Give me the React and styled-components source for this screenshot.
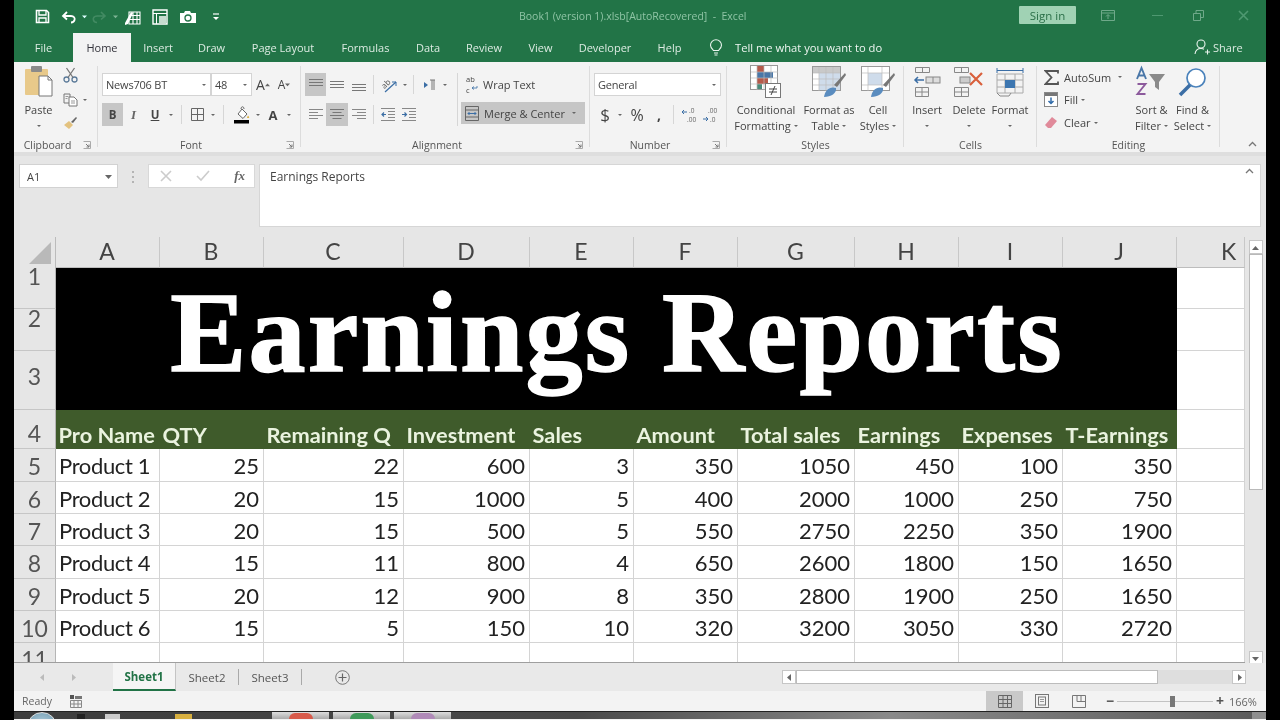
import React from 'react';
import styled, { createGlobalStyle } from 'styled-components';

const Global = createGlobalStyle`
  html, body { margin: 0; padding: 0; background: #000; }
  #root { width: 1280px; height: 720px; overflow: hidden; }
`;
const ui = `"Open Sans", "Noto Sans", sans-serif`;
const cell = `Lato, "Noto Sans", sans-serif`;

const Page = styled.div`width:1280px;height:720px;background:#000;padding:0 14px;box-sizing:border-box;`;
const Screen = styled.div`width:1252px;height:720px;display:flex;flex-direction:column;overflow:hidden;background:#f3f3f3;font-family:${ui};font-size:11px;color:#444;filter:blur(.35px);`;

/* title bar */
const TitleBar = styled.div`height:33px;flex:none;background:#227447;display:flex;align-items:center;color:#fff;`;
const Qat = styled.div`width:505px;flex:none;display:flex;align-items:center;padding-left:20px;box-sizing:border-box;`;
const QatSlot = styled.div`width:${p=>p.$w}px;display:flex;justify-content:center;align-items:center;opacity:${p=>p.$dim?.35:1};`;
const DocTitle = styled.div`flex:none;width:400px;color:#8fc4a5;font-size:10.5px;white-space:pre;margin-top:-2px;`;
const SignIn = styled.div`width:57px;height:18px;margin-left:100px;background:#a0d2b4;color:#2b6f49;display:flex;align-items:center;justify-content:center;font-size:11.5px;border-radius:1px;margin-top:-3px;`;
const WinBtns = styled.div`display:flex;align-items:center;margin-top:-3px;`;
const WinBtn = styled.div`width:${p=>p.$w}px;display:flex;justify-content:center;`;

/* tabs */
const TabBar = styled.div`height:29px;flex:none;background:#227447;display:flex;align-items:stretch;`;
const Tab = styled.div`width:${p=>p.$w}px;flex:none;display:flex;align-items:center;justify-content:center;color:${p=>p.$on?'#33333b':'#dcebe2'};background:${p=>p.$on?'#f3f3f3':'transparent'};font-size:11px;padding-bottom:1px;box-sizing:border-box;`;
const TellMe = styled.div`display:flex;align-items:center;margin-left:14px;gap:12px;color:#eef6f1;font-size:11.2px;width:485px;padding-bottom:1px;`;
const Share = styled.div`display:flex;align-items:center;gap:2px;color:#dcebe2;font-size:11px;padding-bottom:1px;`;

/* ribbon */
const Ribbon = styled.div`height:90px;flex:none;background:#f3f3f3;display:flex;position:relative;border-bottom:4px solid #dedede;box-sizing:content-box;`;
const Group = styled.div`width:${p=>p.$w}px;flex:none;box-sizing:border-box;display:flex;flex-direction:column;position:relative;&::after{content:"";position:absolute;right:0;top:4px;bottom:5px;width:1px;background:#dcdcdc;}`;
const GroupBody = styled.div`height:75px;display:flex;padding-left:${p=>p.$pl||0}px;padding-top:${p=>p.$pt||0}px;box-sizing:border-box;`;
const GroupFoot = styled.div`height:15px;display:flex;align-items:center;padding:0 0 0 ${p=>p.$lp||0}px;font-size:10.5px;color:#555;& > span{text-align:center;flex:1;}`;
const Launch = styled.div`width:17px;flex:none;display:flex;justify-content:flex-start;padding-left:2px;box-sizing:border-box;`;
const Rows = styled.div`display:flex;flex-direction:column;gap:${p=>p.$gap??7}px;width:${p=>p.$w?p.$w+'px':'auto'};flex:none;`;
const Row = styled.div`display:flex;height:${p=>p.$h||23}px;align-items:center;`;
const Btn = styled.div`width:${p=>p.$w}px;height:23px;flex:none;display:flex;align-items:center;justify-content:center;background:${p=>p.$on?'#c6c6c6':'transparent'};font-weight:${p=>p.$bold?700:400};color:#444;font-size:${p=>p.$fs||12}px;`;
const Sep = styled.div`width:1px;height:19px;background:#d6d6d6;margin:0 ${p=>p.$m??5}px;flex:none;`;
const VSep = styled.div`width:1px;height:53px;background:#d6d6d6;margin:0 3px 0 0;flex:none;`;
const Drop = styled.div`width:${p=>p.$w||10}px;flex:none;display:flex;justify-content:center;align-items:center;`;
const Caret = styled.span`display:inline-block;width:0;height:0;border-left:2.5px solid transparent;border-right:2.5px solid transparent;border-top:2.5px solid #666;`;
const Field = styled.div`width:${p=>p.$w}px;height:23px;flex:none;box-sizing:border-box;background:#fff;border:1px solid #d4d4d4;display:flex;align-items:center;justify-content:space-between;padding:0 4px 0 3px;font-size:11px;letter-spacing:-.2px;color:#444;`;
const Big = styled.div`width:${p=>p.$w}px;flex:none;display:flex;flex-direction:column;align-items:center;color:#444;margin-top:${p=>p.$mt||0}px;`;
const BigIcon = styled.div`height:40px;display:flex;align-items:center;justify-content:center;`;
const BigLine = styled.div`height:16px;line-height:16px;white-space:nowrap;font-size:11px;display:flex;align-items:center;gap:3px;`;
const SmallText = styled.span`font-size:11px;margin-left:${p=>p.$ml||0}px;white-space:nowrap;`;
const WideBtn = styled.div`width:124px;height:22px;display:flex;align-items:center;padding-left:${p=>p.$pl||0}px;box-sizing:border-box;background:${p=>p.$on?'#c6c6c6':'transparent'};`;
const Collapse = styled.div`position:absolute;right:9px;bottom:2px;`;

/* formula */
const FormulaBand = styled.div`height:81px;flex:none;background:#e6e6e6;display:flex;align-items:flex-start;padding:8px 5px 0;box-sizing:border-box;`;
const NameBox = styled.div`width:99px;height:24px;box-sizing:border-box;background:#fff;border:1px solid #d2d2d2;display:flex;align-items:center;justify-content:space-between;padding:0 5px 0 7px;font-size:11px;`;
const Dots = styled.div`width:30px;display:flex;flex-direction:column;align-items:center;gap:3px;padding-top:7px;& i{width:2px;height:2px;background:#b4b4b4;display:block;}`;
const FxBox = styled.div`width:107px;height:24px;box-sizing:border-box;background:#fff;border:1px solid #d8d8d8;display:flex;align-items:center;justify-content:space-between;padding:0 9px 0 11px;`;
const FxMark = styled.i`font-family:"Liberation Serif",serif;font-size:13px;font-weight:700;color:#666;`;
const Formula = styled.div`margin-left:4px;width:1002px;height:63px;box-sizing:border-box;background:#fff;border:1px solid #d6d6d6;padding:3px 6px 0 10px;display:flex;justify-content:space-between;font-size:12px;color:#444;`;

/* sheet */
const SheetArea = styled.div`height:426px;flex:none;display:flex;background:#e6e6e6;`;
const Grid = styled.div`width:1231px;flex:none;display:grid;grid-template-columns:42px 104px 104px 140px 126px 104px 104px 117px 104px 104px 114px 68px;grid-template-rows:31px 41px 42px 59px 39px 33px 32px 32px 33px 32px 32px 20px;overflow:hidden;background:#fff;border-bottom:1px solid #9f9f9f;height:425px;`;
const Corner = styled.div`background:#e6e6e6;display:flex;align-items:flex-end;justify-content:flex-end;padding:0 4px 4px 0;border-right:1px solid #bbb;`;
const ColHead = styled.div`background:#e6e6e6;border-right:1px solid #c8c8c8;border-bottom:1px solid #bdbdbd;display:flex;align-items:center;justify-content:center;font-family:${cell};font-size:23px;color:#444;padding:0 ${p=>p.$pl?0:1}px 2px ${p=>p.$pl||0}px;box-sizing:border-box;`;
const RowHead = styled.div`background:#e6e6e6;border-bottom:1px solid #c6c6c6;border-right:1px solid #b5b5b5;display:flex;justify-content:center;align-items:${p=>p.$end?'flex-end':'flex-start'};font-family:${cell};font-size:23px;color:#555;line-height:${p=>p.$lh||26}px;padding-top:${p=>p.$pt||0}px;padding-bottom:${p=>p.$pb||0}px;box-sizing:border-box;`;
const Banner = styled.div`grid-column:2 / 12;grid-row:2 / 5;background:#000;color:#fff;display:flex;align-items:center;justify-content:center;font-family:"Liberation Serif",serif;font-weight:700;font-size:114px;line-height:1;letter-spacing:2.2px;padding:0 0 12px 1px;white-space:nowrap;-webkit-text-stroke:1.5px #fff;`;
const Empty = styled.div`border-bottom:1px solid #d4d4d4;border-right:1px solid #d4d4d4;box-sizing:border-box;`;
const HeadCell = styled.div`background:#3f5b2b;color:#eaf3df;font-family:${cell};font-weight:700;font-size:21.8px;display:flex;align-items:flex-end;padding:0 0 1px 2.5px;box-sizing:border-box;white-space:nowrap;`;
const DataCell = styled.div`border-bottom:1px solid #d4d4d4;border-right:1px solid #d4d4d4;box-sizing:border-box;display:flex;align-items:center;justify-content:${p=>p.$num?'flex-end':'flex-start'};padding:1px ${p=>p.$num?4:3}px 0 3px;font-family:${cell};font-size:22px;color:#222;letter-spacing:${p=>p.$num?0:-.35}px;`;

const VBar = styled.div`width:21px;flex:none;display:flex;flex-direction:column;align-items:center;padding-top:3px;box-sizing:border-box;height:428px;`;
const ScrollBtn = styled.div`width:14px;height:14px;flex:none;background:#fff;border:1px solid #c6c6c6;box-sizing:border-box;display:flex;align-items:center;justify-content:center;`;
const VThumb = styled.div`width:14px;height:236px;flex:none;background:#fff;border:1px solid #b9b9b9;box-sizing:border-box;`;
const VTrack = styled.div`flex:1;`;

const TabsBar = styled.div`height:28px;flex:none;background:#e9e9e9;display:flex;align-items:center;`;
const NavArrows = styled.div`width:99px;display:flex;gap:24px;padding-left:25px;box-sizing:border-box;`;
const Sheet = styled.div`width:${p=>p.$w}px;height:100%;display:flex;align-items:center;justify-content:center;font-size:11.5px;box-sizing:border-box;color:${p=>p.$on?'#217346':'#555'};font-weight:${p=>p.$on?700:400};background:${p=>p.$on?'#f5f5f5':'transparent'};border-bottom:${p=>p.$on?'2px solid #217346':'none'};border-right:${p=>p.$on?'1px solid #c4c4c4':'none'};`;
const TabDiv = styled.div`width:1px;height:16px;background:#a9a9a9;flex:none;`;
const AddBtn = styled.div`width:80px;display:flex;justify-content:center;`;
const HScroll = styled.div`margin-left:400px;display:flex;align-items:center;`;
const HThumb = styled.div`width:362px;height:14px;background:#fff;border:1px solid #bcbcbc;box-sizing:border-box;`;
const HTrack = styled.div`width:74px;height:14px;background:#dedede;`;

const Status = styled.div`height:20px;flex:none;background:#f3f3f3;display:flex;align-items:center;font-size:10.5px;color:#666;`;
const StatusLeft = styled.div`width:972px;display:flex;align-items:center;gap:18px;padding-left:8px;box-sizing:border-box;`;
const ViewBtn = styled.div`width:37px;height:20px;display:flex;align-items:center;justify-content:center;background:${p=>p.$on?'#c9c9c9':'transparent'};`;
const Zoomer = styled.div`display:flex;align-items:center;margin-left:7px;width:125px;`;
const Mark = styled.span`font-size:14px;font-weight:700;color:#555;line-height:1;width:12px;text-align:center;`;
const Track = styled.div`width:96px;height:1px;background:#c2c2c2;margin:0 1px;display:flex;align-items:center;padding-left:53px;box-sizing:border-box;`;
const Handle = styled.div`width:5px;height:11px;background:#777;flex:none;`;
const ZoomPct = styled.div`font-size:11px;color:#666;`;

const Taskbar = styled.div`height:8px;flex:none;background:linear-gradient(90deg,#3d3d3d 0%,#4a4a4a 45%,#8a8a8a 70%,#5a5a5a 100%);border-top:1px solid #222;display:flex;box-sizing:border-box;overflow:hidden;`;
const Orb = styled.div`width:28px;height:28px;border-radius:50%;margin-left:13px;background:radial-gradient(circle,#bfd8e6,#6c98ad);border:1px solid #ddd;flex:none;`;
const TaskIcon = styled.div`width:${p=>p.$w}px;height:5px;margin:2px 0 0 ${p=>p.$m}px;background:${p=>p.$c};flex:none;`;
const TaskButton = styled.div`width:57px;margin-left:${p=>p.$m||4}px;flex:none;background:linear-gradient(#ddd,#aaa);display:flex;justify-content:center;& i{display:block;width:24px;height:6px;border-radius:12px 12px 0 0;background:${p=>p.$c};margin-top:1px;}`;
const TaskEnd = styled.div`width:14px;margin-left:auto;background:#8f8f8f;`;

const S = ({w=16,h=16,vb,children,style})=> <svg width={w} height={h} viewBox={vb||`0 0 ${w} ${h}`} fill="none" style={style}>{children}</svg>;

const SaveIcon=()=> <S w={15} h={15}><path d="M1.5 1.5h10l2 2v10h-12z" stroke="#fff" strokeWidth="1.6"/><path d="M4 2v4h7V2M4 13V9h7v4" stroke="#fff" strokeWidth="1.3"/></S>;
const UndoIcon=({c='#fff'})=> <S w={16} h={14}><path d="M6 2L2 6l4 3.5M2.5 6H10c3 0 4 2 3.6 3.8C13.2 11.5 12 12.5 10 12.5" stroke={c} strokeWidth="1.8"/></S>;
const RedoIcon=()=> <S w={16} h={14}><path d="M10 2l4 4-4 3.5M13.5 6H6C3 6 2 8 2.4 9.8 2.8 11.5 4 12.5 6 12.5" stroke="#7fb596" strokeWidth="1.6"/></S>;
const FormIcon=()=> <S w={17} h={16}><path d="M5 3h11v12H5zM5 6.5h11M5 10.5h11M9 3v12M13 3v12" stroke="#fff" strokeWidth="1.1"/><path d="M1 14L7 3l2 1-5 11-3 1z" fill="#fff"/></S>;
const PreviewIcon=()=> <S w={16} h={16}><path d="M1 1h14v14H1z" stroke="#fff" strokeWidth="1.4"/><path d="M1 4.5h14M4.5 4.5V15" stroke="#fff"/><rect x="7" y="7" width="7" height="7" fill="#c6dccf"/></S>;
const CameraIcon=()=> <S w={16} h={13}><path d="M0 3h4l1-2h5l1 2h5v10H0z" fill="#fff"/><circle cx="8" cy="8" r="3" stroke="#227447" strokeWidth="1.3"/></S>;
const QatMore=()=> <S w={8} h={9}><path d="M1 2h6" stroke="#fff" strokeWidth="1.2"/><path d="M1 5h6L4 8z" fill="#fff"/></S>;
const Bulb=()=> <S w={14} h={17}><path d="M4.5 11.5C3 10 1.5 8.7 1.5 6.2a5.5 5.5 0 0111 0c0 2.5-1.5 3.800-3 5.300zM5 14h4M5.500 16h3" stroke="#eaf4ee" strokeWidth="1.1"/></S>;
const ShareIcon=()=> <S w={17} h={16}><circle cx="7" cy="5" r="4" stroke="#eaf4ee" strokeWidth="1.1"/><path d="M1 15c.5-3.500 2.500-5.500 6-5.500 1.300 0 2.300.3 3 .8M11 13h5M13.500 10.500v5" stroke="#eaf4ee" strokeWidth="1.1"/></S>;

const PasteIcon=()=> <S w={30} h={34}><rect x="1" y="4" width="23" height="26" rx="1" fill="#e8c98a"/><rect x="7" y="1" width="11" height="6" rx="1" fill="#8a8a8a"/><path d="M15 11h9l4 4v16H15z" fill="#fff" stroke="#777"/><path d="M24 11v4h4" stroke="#777"/></S>;
const CutIcon=()=> <S w={15} h={16}><circle cx="3.500" cy="12.500" r="2.500" stroke="#5b7a99" strokeWidth="1.3"/><circle cx="11.500" cy="12.500" r="2.500" stroke="#5b7a99" strokeWidth="1.3"/><path d="M5 10.500L11.500 1M10 10.500L3.500 1" stroke="#777" strokeWidth="1.3"/></S>;
const CopyIcon=()=> <S w={15} h={14}><path d="M1 1h6v9H1z" stroke="#777" fill="#f3f3f3"/><path d="M6 4h5l3 3v6H6z" stroke="#777" fill="#fff"/><path d="M8 8h4M8 10h4M2.500 3.500h3M2.500 5.500h2" stroke="#999"/></S>;
const BrushIcon=()=> <S w={15} h={14}><path d="M1 9l5-4 4 4-4 4z" fill="#e3c27f"/><path d="M8 6l5-5 1 1-4 5z" fill="#666"/></S>;
const Launcher=()=> <S w={8} h={8}><path d="M.5.5h7v7h-7" stroke="#aaa"/><path d="M3 3l3 3M6 3.500V6H3.500" stroke="#777"/></S>;
const BorderIcon=()=> <S w={13} h={13}><path d="M.5.5h12v12H.5zM6.500.5v12M.5 6.500h12" stroke="#666"/></S>;
const FillIcon=()=> <S w={17} h={19}><path d="M5 9l4-5 5 5-4 4.500z" fill="#fff" stroke="#666"/><path d="M8 4c0-3 3-3 3 0" stroke="#666"/><path d="M15 10.500l1.300 2.200-2.300.3z" fill="#d8a520"/><rect x="1" y="15" width="15" height="3.500" fill="#000"/></S>;
const lines=(ys,ws,c='#777',w=16,h=14,x0)=> <S w={w} h={h}>{ys.map((y,i)=><rect key={i} x={x0?x0(ws[i]):(w-ws[i])/2} y={y} width={ws[i]} height="1" fill={c}/>)}</S>;
const OrientIcon=()=> <S w={16} h={16} style={{overflow:'visible'}}><text x="1" y="10" fontSize="8" fontFamily="Open Sans" fill="#555" transform="rotate(-45 5 8)">ab</text><path d="M4 15L15 5" stroke="#3b6ea5" strokeWidth="1.200"/><path d="M15 9V5h-4" stroke="#3b6ea5"/></S>;
const RtlIcon=()=> <S w={13} h={12}><path d="M1 3l4 3-4 3z" fill="#3b6ea5"/><path d="M7 1h5M9 1v10M11 1v10" stroke="#777"/></S>;
const IndentIcon=({inc})=> <S w={16} h={13}><path d="M1 .5h14M1 12.500h14M8 3.500h7M8 6.500h7M8 9.500h7" stroke="#888"/><path d={inc?"M1 6.500h4M3.500 4.500l2 2-2 2":"M6 6.500H2M4 4.500l-2 2 2 2"} stroke="#3b6ea5" strokeWidth="1.200"/></S>;
const WrapIcon=()=> <S w={13} h={16} style={{overflow:'visible'}}><text x="0" y="6" fontSize="7.500" fontFamily="Open Sans" fill="#444">ab</text><text x="0" y="16.500" fontSize="7.500" fontFamily="Open Sans" fill="#444">c</text><path d="M6 12h5V10M6 12l2-1.500M6 12l2 1.500" stroke="#3b6ea5" strokeWidth=".8"/></S>;
const MergeIcon=()=> <S w={14} h={15}><path d="M.5.5h13v14H.5zM.5 4h13M.5 11h13" stroke="#666"/><path d="M3 7.500h8M4.500 6l-1.500 1.500L4.500 9M9.500 6L11 7.500 9.500 9" stroke="#3b6ea5"/></S>;
const DecIcon=({r})=> <S w={18} h={14} style={{overflow:'visible'}}>
  <text x={r?6:8} y="5" fontSize="6.500" fill="#666" fontFamily="Open Sans">{r?'.00':'.0'}</text>
  <text x={r?8:6} y="14" fontSize="6.500" fill="#666" fontFamily="Open Sans">{r?'.0':'.00'}</text>
  <path d={r?"M1 11h5M4 9l2 2-2 2":"M1 4h5M3 2L1 4l2 2"} stroke="#3b6ea5"/></S>;

const CondIcon=()=> <S w={32} h={34}><rect x=".5" y=".5" width="27" height="24" fill="#fff" stroke="#999"/><rect x="7" y="1" width="7" height="6" fill="#b55a4b"/><rect x="7" y="7" width="16" height="6" fill="#4a77a8"/><rect x="7" y="13" width="11" height="6" fill="#b55a4b"/><rect x="7" y="19" width="5" height="5" fill="#4a8a7a"/><path d="M7 1v24M14 1v24M21 1v24M1 7h27M1 13h27M1 19h27" stroke="#bbb" strokeWidth=".7"/><rect x="15.500" y="18.500" width="15" height="14" fill="#fff" stroke="#777"/><path d="M19 24h8M19 27h8M25 21l-4 9" stroke="#444"/></S>;
const TableIcon=()=> <S w={34} h={32}><rect x=".5" y=".5" width="28" height="24" fill="#fff" stroke="#999"/><rect x="1" y="1" width="27" height="6" fill="#c9c9c9"/><rect x="7" y="7" width="21" height="17" fill="#cfdceb"/><path d="M7 1v24M14 1v24M21 1v24M1 7h27M1 13h27M1 19h27" stroke="#bbb" strokeWidth=".7"/><path d="M22 19L33 7l1 2-9 12z" fill="#777"/><path d="M12 31c1-7 6-11 12-9 1 5-5 9-12 9z" fill="#5a8cbf"/></S>;
const CellStyIcon=()=> <S w={34} h={32}><rect x=".5" y=".5" width="28" height="24" fill="#fff" stroke="#999"/><rect x="7" y="7" width="14" height="12" fill="#cfdceb"/><path d="M1 7h27M1 19h27M7 1v24M21 1v24" stroke="#bbb" strokeWidth=".7"/><path d="M22 19L33 7l1 2-9 12z" fill="#777"/><path d="M10 31c1-7 6-11 12-9 1 5-5 9-12 9z" fill="#5a8cbf"/></S>;
const InsertIcon=()=> <S w={28} h={30}><path d="M2.500.5h14v5h-14zM9.500.5v5M2.500 20.500h13v9h-13zM9 20.500v9M2.500 25h13" stroke="#888"/><path d="M2 13h9M5 10l-3 3 3 3" stroke="#3b6ea5" strokeWidth="1.500"/><rect x="13" y="10" width="14" height="6" fill="#ddd" stroke="#888"/><path d="M20 10v6" stroke="#888"/></S>;
const DeleteIcon=()=> <S w={30} h={30}><path d="M.5.5h14v5h-14zM7.500.5v5M.5 20.500h14v9H.5zM7.500 20.500v9M.5 25h14" stroke="#888"/><rect x="6" y="10" width="10" height="6" fill="#ccc" stroke="#888"/><path d="M16 6l12 12M28 6L16 18" stroke="#d9603c" strokeWidth="2.200"/></S>;
const FormatIcon=()=> <S w={28} h={30}><path d="M1 1v5M27 1v5M1 3.500h26" stroke="#3b6ea5"/><path d="M1 7h26v19H1zM9 7v19M19 7v19M1 13h26M1 20h26" stroke="#aaa"/><rect x="9" y="13" width="10" height="8" fill="#3d76b0"/><path d="M1 26l3 3h9l2-3" stroke="#888"/></S>;
const SigmaIcon=()=> <S w={15} h={15}><path d="M14 3.500V1H1.500l6 6.500-6 6.500H14v-2.500" stroke="#555" strokeWidth="1.800"/></S>;
const FillDown=()=> <S w={14} h={15}><rect x=".5" y=".5" width="13" height="14" fill="#fff" stroke="#888"/><rect x="1" y="1" width="12" height="3" fill="#777"/><path d="M7 5.500v6M4.500 9L7 11.500 9.500 9" stroke="#2f6aa8" strokeWidth="1.500"/></S>;
const EraserIcon=()=> <S w={14} h={13}><path d="M1 9l7-8 5 4-6 7H4z" fill="#e08a9a"/></S>;
const SortIcon=()=> <S w={32} h={30} style={{overflow:'visible'}}><path d="M1 12L5.500 1 10 12M3 8.500h5" stroke="#4a77a8" strokeWidth="1.900"/><path d="M1.500 17h8l-8 10h8" stroke="#8c5a9c" strokeWidth="1.900"/><path d="M13 7h16l-6 8v8l-4-3v-5z" fill="#8a8a8a"/></S>;
const FindIcon=()=> <S w={30} h={30}><circle cx="18" cy="11" r="9" stroke="#4a82bb" strokeWidth="1.700" fill="#fff"/><path d="M12 18L2 28" stroke="#3b6ea5" strokeWidth="3.500"/></S>;
const XIcon=({c='#ccc',s=12})=> <S w={s} h={s}><path d={`M1 1L${s-1} ${s-1}M${s-1} 1L1 ${s-1}`} stroke={c} strokeWidth="1.600"/></S>;
const CheckIcon=()=> <S w={14} h={12}><path d="M1 6l4 4 8-9" stroke="#ccc" strokeWidth="1.600"/></S>;
const Chevron=({c='#777'})=> <S w={9} h={6}><path d="M1 5l3.500-3.500L8 5" stroke={c} strokeWidth="1.300"/></S>;
const Tri=({d,c='#666',s=7})=> { const p={up:'M0 6L3.500 2 7 6z',down:'M0 2l3.500 4L7 2z',left:'M5 0L1 3.500 5 7z',right:'M2 0l4 3.500L2 7z'}[d]; return <S w={s} h={s} vb="0 0 7 7"><path d={p} fill={c}/></S>; };
const PlusCircle=()=> <S w={15} h={15}><circle cx="7.500" cy="7.500" r="6.800" stroke="#777"/><path d="M3.500 7.500h8M7.500 3.500v8" stroke="#666" strokeWidth="1.200"/></S>;
const MacroIcon=()=> <S w={12} h={13}><rect x="0" y="0" width="4" height="4" fill="#555"/><rect x="5" y="1" width="7" height="3" fill="#777"/><path d="M.5 5.500h11v7H.5zM4 5.500v7M8 5.500v7M.5 9h11" stroke="#888"/></S>;
const NormalView=()=> <S w={14} h={13}><path d="M.5.5h13v12H.5zM5 .5v12M9.500.5v12M.5 4.500h13M.5 8.500h13" stroke="#666"/></S>;
const LayoutView=()=> <S w={14} h={14}><rect x=".5" y=".5" width="13" height="13" stroke="#777"/><rect x="3.500" y="3" width="7" height="8" stroke="#777"/><path d="M5 5.500h4M5 7.500h4" stroke="#999"/></S>;
const BreakView=()=> <S w={14} h={13}><path d="M.5 12.500V.5h13v12zM5 .5v6h8M9 .5v6" stroke="#777"/></S>;
const RestoreIcon=()=> <S w={11} h={11}><path d="M.5 3.500h7v7h-7zM3 3V.5h7.500v7H8" stroke="#6fa98a"/></S>;
const RibbonOpt=()=> <S w={14} h={11}><path d="M.5.5h13v10H.5zM.5 3h13" stroke="#6fa98a"/><path d="M7 9V5M5 6.500L7 4.500l2 2" stroke="#6fa98a"/></S>;

const colLetters = ['A','B','C','D','E','F','G','H','I','J','K'];
const heads = ['Pro Name','QTY','Remaining Q','Investment','Sales','Amount','Total sales','Earnings','Expenses','T-Earnings'];
const data = [
 ['Product 1',25,22,600,3,350,1050,450,100,350],
 ['Product 2',20,15,1000,5,400,2000,1000,250,750],
 ['Product 3',20,15,500,5,550,2750,2250,350,1900],
 ['Product 4',15,11,800,4,650,2600,1800,150,1650],
 ['Product 5',20,12,900,8,350,2800,1900,250,1650],
 ['Product 6',15,5,150,10,320,3200,3050,330,2720],
];
const tabs=[['File',59],['Home',58],['Insert',54],['Draw',53],['Page Layout',90],['Formulas',75],['Data',50],['Review',62],['View',51],['Developer',78],['Help',51]];

const Foot=({t,l,lp})=> <GroupFoot $lp={lp}><span>{t}</span>{l && <Launch><Launcher/></Launch>}</GroupFoot>;

export default function App(){
 return <Page><Global/><Screen>
  <TitleBar>
   <Qat>
    <QatSlot $w={16}><SaveIcon/></QatSlot>
    <QatSlot $w={10}/>
    <QatSlot $w={18}><UndoIcon/></QatSlot>
    <QatSlot $w={12}><Tri d="down" c="#dff" s={5}/></QatSlot>
    <QatSlot $w={18} $dim><RedoIcon/></QatSlot>
    <QatSlot $w={14}><Tri d="down" c="#7fb596" s={5}/></QatSlot>
    <QatSlot $w={20}><FormIcon/></QatSlot>
    <QatSlot $w={8}/>
    <QatSlot $w={20}><PreviewIcon/></QatSlot>
    <QatSlot $w={8}/>
    <QatSlot $w={20}><CameraIcon/></QatSlot>
    <QatSlot $w={8}/>
    <QatSlot $w={20}><QatMore/></QatSlot>
   </Qat>
   <DocTitle>{'Book1 (version 1).xlsb[AutoRecovered]  -  Excel'}</DocTitle>
   <SignIn>Sign in</SignIn>
   <WinBtns>
    <WinBtn $w={64}><RibbonOpt/></WinBtn>
    <WinBtn $w={34}><S w={11} h={3}><path d="M0 1.500h11" stroke="#4f9871"/></S></WinBtn>
    <WinBtn $w={48}><RestoreIcon/></WinBtn>
    <WinBtn $w={42}><XIcon c="#4f9871" s={11}/></WinBtn>
   </WinBtns>
  </TitleBar>
  <TabBar>
   {tabs.map(([t,w])=><Tab key={t} $w={w} $on={t==='Home'}>{t}</Tab>)}
   <TellMe><Bulb/>Tell me what you want to do</TellMe>
   <Share><ShareIcon/>Share</Share>
  </TabBar>
  <Ribbon>
   <Group $w={84}>
    <GroupBody $pl={2}>
     <Big $w={45}><BigIcon><PasteIcon/></BigIcon><BigLine>Paste</BigLine><BigLine><Caret/></BigLine></Big>
     <Rows $gap={0} $w={30}>
      <Row $h={26}><Drop $w={18}><CutIcon/></Drop></Row>
      <Row $h={23}><Drop $w={18}><CopyIcon/></Drop><Drop $w={12}><Caret/></Drop></Row>
      <Row $h={23}><Drop $w={18}><BrushIcon/></Drop></Row>
     </Rows>
    </GroupBody>
    <Foot t="Clipboard" l/>
   </Group>

   <Group $w={203}>
    <GroupBody $pl={4} $pt={11}>
     <Rows>
      <Row>
       <Field $w={109}>News706 BT<Caret/></Field>
       <Field $w={41}>48<Caret/></Field>
       <Btn $w={22} $fs={14}>A<Tri d="up" s={5} /></Btn>
       <Btn $w={20} $fs={12}>A<Tri d="down" s={5}/></Btn>
      </Row>
      <Row>
       <Btn $w={21} $on $bold $fs={11.5}>B</Btn>
       <Btn $w={21} $fs={12}><FxMark>I</FxMark></Btn>
       <Btn $w={22} $bold $fs={11.5}><u>U</u></Btn>
       <Drop><Caret/></Drop>
       <Sep/>
       <Btn $w={21}><BorderIcon/></Btn>
       <Drop><Caret/></Drop>
       <Sep/>
       <Btn $w={24}><FillIcon/></Btn>
       <Drop $w={9}><Caret/></Drop>
       <Btn $w={22} $bold $fs={13}>A</Btn>
       <Drop><Caret/></Drop>
      </Row>
     </Rows>
    </GroupBody>
    <Foot t="Font" l/>
   </Group>

   <Group $w={289}>
    <GroupBody $pl={4} $pt={11}>
     <Rows $w={152}>
      <Row>
       <Btn $w={21} $on>{lines([1,4,7],[14,14,14],'#777')}</Btn>
       <Btn $w={22}>{lines([3,6,9],[14,14,14],'#777')}</Btn>
       <Btn $w={21}>{lines([6,9,12],[14,14,14],'#777')}</Btn>
       <Sep $m={4}/>
       <Btn $w={22}><OrientIcon/></Btn>
       <Drop $w={9}><Caret/></Drop>
       <Sep $m={4}/>
       <Btn $w={22}><RtlIcon/></Btn>
       <Drop><Caret/></Drop>
      </Row>
      <Row>
       <Btn $w={21}>{lines([1,4,7,10],[14,9,14,9],'#888',16,14,()=>1)}</Btn>
       <Btn $w={22} $on>{lines([1,4,7,10],[14,9,14,9],'#777')}</Btn>
       <Btn $w={21}>{lines([1,4,7,10],[14,9,14,9],'#888',16,14,(w)=>15-w)}</Btn>
       <Sep $m={4}/>
       <Btn $w={20}><IndentIcon/></Btn>
       <Btn $w={21}><IndentIcon inc/></Btn>
      </Row>
     </Rows>
     <VSep/>
     <Rows $w={124}>
      <WideBtn $pl={5}><WrapIcon/><SmallText $ml={4}>Wrap Text</SmallText></WideBtn>
      <WideBtn $on $pl={4}><MergeIcon/><SmallText $ml={5}>Merge &amp; Center</SmallText><Drop $w={18} ><Caret/></Drop></WideBtn>
     </Rows>
    </GroupBody>
    <Foot t="Alignment" l/>
   </Group>

   <Group $w={137}>
    <GroupBody $pl={4} $pt={11}>
     <Rows>
      <Row><Field $w={127}>General<Caret/></Field></Row>
      <Row>
       <Btn $w={22} $fs={17}>$</Btn><Drop $w={8}><Caret/></Drop>
       <Btn $w={26} $fs={16}>%</Btn>
       <Btn $w={18} $bold $fs={14}>,</Btn>
       <Sep $m={5}/>
       <Btn $w={21}><DecIcon/></Btn>
       <Btn $w={21}><DecIcon r/></Btn>
      </Row>
     </Rows>
    </GroupBody>
    <Foot t="Number" l/>
   </Group>

   <Group $w={177}>
    <GroupBody $pl={2}>
     <Big $w={74}><BigIcon><CondIcon/></BigIcon><BigLine>Conditional</BigLine><BigLine>Formatting <Caret/></BigLine></Big>
     <Big $w={52}><BigIcon><TableIcon/></BigIcon><BigLine>Format as</BigLine><BigLine>Table <Caret/></BigLine></Big>
     <Big $w={46}><BigIcon><CellStyIcon/></BigIcon><BigLine>Cell</BigLine><BigLine>Styles <Caret/></BigLine></Big>
    </GroupBody>
    <Foot t="Styles"/>
   </Group>

   <Group $w={133}>
    <GroupBody $pl={2}>
     <Big $w={42}><BigIcon><InsertIcon/></BigIcon><BigLine>Insert</BigLine><BigLine><Caret/></BigLine></Big>
     <Big $w={42}><BigIcon><DeleteIcon/></BigIcon><BigLine>Delete</BigLine><BigLine><Caret/></BigLine></Big>
     <Big $w={40}><BigIcon><FormatIcon/></BigIcon><BigLine>Format</BigLine><BigLine><Caret/></BigLine></Big>
    </GroupBody>
    <Foot t="Cells"/>
   </Group>

   <Group $w={183}>
    <GroupBody $pl={7} $pt={4}>
     <Rows $gap={0} $w={87}>
      <Row $h={22}><SigmaIcon/><SmallText $ml={5}>AutoSum</SmallText><Drop $w={18}><Caret/></Drop></Row>
      <Row $h={23}><FillDown/><SmallText $ml={6}>Fill</SmallText><Drop $w={10}><Caret/></Drop></Row>
      <Row $h={23}><EraserIcon/><SmallText $ml={6}>Clear</SmallText><Drop $w={10}><Caret/></Drop></Row>
     </Rows>
     <Big $w={41} $mt={-4}><BigIcon><SortIcon/></BigIcon><BigLine>Sort &amp;</BigLine><BigLine>Filter <Caret/></BigLine></Big>
     <Big $w={41} $mt={-4}><BigIcon><FindIcon/></BigIcon><BigLine>Find &amp;</BigLine><BigLine>Select <Caret/></BigLine></Big>
    </GroupBody>
    <Foot t="Editing"/>
   </Group>
   <Collapse><Chevron/></Collapse>
  </Ribbon>

  <FormulaBand>
   <NameBox>A1<Tri d="down"/></NameBox>
   <Dots><i/><i/><i/></Dots>
   <FxBox><XIcon/><CheckIcon/><FxMark>fx</FxMark></FxBox>
   <Formula><span>Earnings Reports</span><Chevron/></Formula>
  </FormulaBand>

  <SheetArea>
   <Grid>
    <Corner><S w={22} h={22}><path d="M0 22L22 0v22z" fill="#b9b9b9"/></S></Corner>
    {colLetters.map(c=><ColHead key={c} $pl={c==='K'?36:0}>{c}</ColHead>)}
    <RowHead $lh={16}>1</RowHead>
    <Banner>Earnings Reports</Banner>
    <Empty/>
    <RowHead $lh={16} $pt={1}>2</RowHead>
    <Empty/>
    <RowHead $pt={12}>3</RowHead>
    <Empty/>
    <RowHead $end $pb={2}>4</RowHead>
    {heads.map(h=><HeadCell key={h}>{h}</HeadCell>)}
    <Empty/>
    {data.map((r,i)=><React.Fragment key={i}>
      <RowHead $pt={4}>{i+5}</RowHead>
      {r.map((v,j)=><DataCell key={j} $num={j>0}>{v}</DataCell>)}
      <Empty/>
    </React.Fragment>)}
    <RowHead $pt={3}>11</RowHead>
    {colLetters.map(c=><Empty key={c}/>)}
   </Grid>
   <VBar>
    <ScrollBtn><Tri d="up"/></ScrollBtn>
    <VThumb/>
    <VTrack/>
    <ScrollBtn><Tri d="down"/></ScrollBtn>
   </VBar>
  </SheetArea>

  <TabsBar>
   <NavArrows><Tri d="left" c="#bbb"/><Tri d="right" c="#bbb"/></NavArrows>
   <Sheet $w={63} $on>Sheet1</Sheet>
   <Sheet $w={62}>Sheet2</Sheet><TabDiv/>
   <Sheet $w={62}>Sheet3</Sheet><TabDiv/>
   <AddBtn><PlusCircle/></AddBtn>
   <HScroll>
    <ScrollBtn><Tri d="left"/></ScrollBtn>
    <HThumb/>
    <HTrack/>
    <ScrollBtn><Tri d="right"/></ScrollBtn>
   </HScroll>
  </TabsBar>

  <Status>
   <StatusLeft>Ready<MacroIcon/></StatusLeft>
   <ViewBtn $on><NormalView/></ViewBtn>
   <ViewBtn><LayoutView/></ViewBtn>
   <ViewBtn><BreakView/></ViewBtn>
   <Zoomer><Mark>−</Mark><Track><Handle/></Track><Mark>+</Mark></Zoomer>
   <ZoomPct>166%</ZoomPct>
  </Status>
  <Taskbar>
   <Orb/>
   <TaskIcon $w={8} $m={20} $c="#222"/>
   <TaskIcon $w={15} $m={20} $c="#ccc"/>
   <TaskIcon $w={17} $m={55} $c="#d8b040"/>
   <TaskButton $m={80} $c="#d85a4a"><i/></TaskButton>
   <TaskButton $c="#3f9a5a"><i/></TaskButton>
   <TaskButton $c="#b08ab8"><i/></TaskButton>
   <TaskEnd/>
  </Taskbar>
 </Screen></Page>;
}
